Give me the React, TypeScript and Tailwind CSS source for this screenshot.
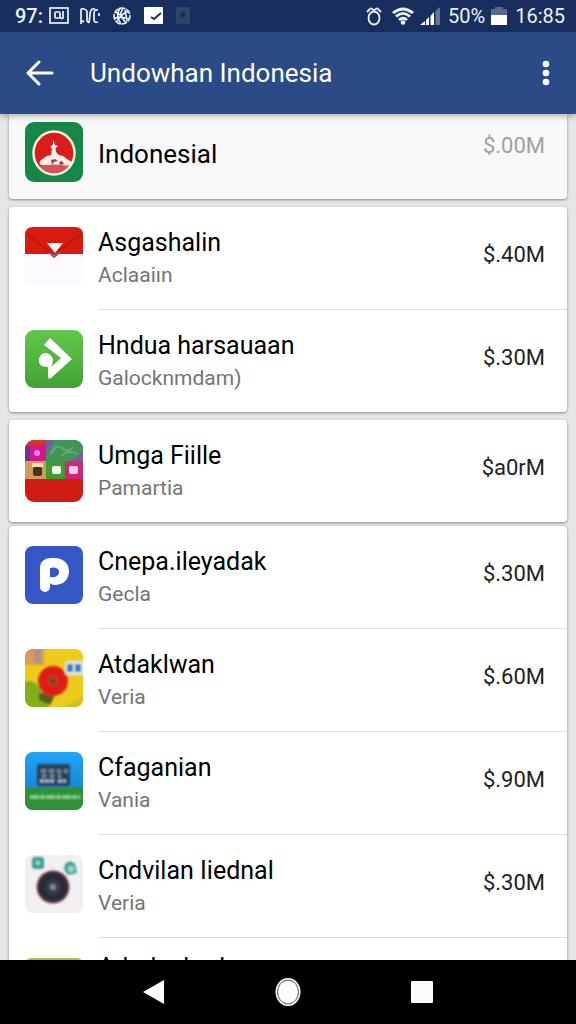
import type { ReactNode } from "react";

type App = { title: string; publisher?: string; price?: string; icon: ReactNode };

function Emblem() {
  return (
    <svg viewBox="0 0 58 60" className="h-15 w-full">
      <rect width="58" height="60" rx="9" fill="#168747" />
      <ellipse cx="29" cy="31" rx="20.5" ry="21.5" fill="#d91c1c" stroke="#f3f1df" strokeWidth="2.5" />
      <path d="M28.5 18 L30 23 33 24 30.5 26 31 30 34 33 38 34 42 37 47 40 Q45 44 41 44 L16 43 Q13 41 16 38 L22 34 26 33 27 26 25 25 27.5 23Z" fill="#fbf0ee" />
      <path d="M26 38 l4 -1 3 2 -4 1 -2 3Z M34 40 l3 -1 2 3 -4 1Z" fill="#9f4540" />
      <path d="M14 44 q15 -3 30 0 q-6 7 -15 7 q-9 0 -15 -7Z" fill="#d85356" />
    </svg>
  );
}

function Envelope() {
  return (
    <svg viewBox="0 0 58 60" className="h-15 w-full">
      <path d="M0 25 H58 V52 Q58 59 50 59 H8 Q0 59 0 52Z" fill="#fdfaff" />
      <path d="M0 27 V8 Q0 0 8 0 H50 Q58 0 58 8 V27Z" fill="#d91a10" />
      <path d="M2 7 L25 25 Q29 29 33 25 L56 7" fill="none" stroke="#bd1710" strokeWidth="2" />
      <path d="M22 16 H38 L30 26Z" fill="#fff4f4" />
      <path d="M24 25 L29 30 35 25" fill="none" stroke="#995160" strokeWidth="2" />
    </svg>
  );
}

function GreenArrow() {
  return (
    <svg viewBox="0 0 58 58" className="w-full">
      <defs>
        <linearGradient id="leaf" x1="0" y1="0" x2="0" y2="1">
          <stop stopColor="#62c74c" />
          <stop offset="1" stopColor="#43a136" />
        </linearGradient>
      </defs>
      <rect width="58" height="58" rx="9" fill="url(#leaf)" />
      <path d="M25 8 L47 29 26 48 Q23 50 23 46 V37 Q14 37 14 31 Q14 23 21 23 Q26 24 28 29 Q28 34 26 37 L36 28 19 15Z" fill="#fff" />
    </svg>
  );
}

function TileGrid() {
  return (
    <svg viewBox="0 0 58 62" className="w-full">
      <defs>
        <clipPath id="tiles"><rect width="58" height="62" rx="9" /></clipPath>
        <filter id="tileSoft"><feGaussianBlur stdDeviation="0.6" /></filter>
      </defs>
      <g clipPath="url(#tiles)">
        <rect width="58" height="62" fill="#d11c14" />
        <g filter="url(#tileSoft)">
          <rect width="22" height="21" fill="#d63825" />
          <rect y="6" width="6" height="15" fill="#6a3596" />
          <rect x="5" y="5" width="16" height="16" fill="#d3148b" />
          <circle cx="12" cy="13" r="3" fill="#f68cdf" />
          <rect x="21" y="-2" width="39" height="23" fill="#3f9656" />
          <path d="M21 0 H30 L24 10 21 14Z M50 18 L58 10 V21 H45Z" fill="#7062a0" />
          <path d="M26 14 Q31 3 37 8 T48 7 M36 16 Q43 9 53 14" fill="none" stroke="#68a878" strokeWidth="2" />
          <rect y="21" width="21" height="18" fill="#d29b58" />
          <rect x="7" y="23" width="11" height="4" fill="#f5dfb5" />
          <rect x="8" y="27" width="9" height="9" rx="2" fill="#453329" />
          <rect x="21" y="21" width="19" height="18" fill="#419c31" />
          <rect x="27" y="26" width="9" height="8" rx="2" fill="#effff0" />
          <rect x="40" y="21" width="20" height="18" fill="#ce2778" />
          <rect x="44" y="26" width="9" height="8" rx="2" fill="#ffc7eb" />
        </g>
      </g>
    </svg>
  );
}

function BlueP() {
  return (
    <svg viewBox="0 0 58 58" className="w-full">
      <rect width="58" height="58" rx="8" fill="#3457c5" />
      <path d="M20 41 V22 Q20 17 26 17 H30 Q39 18 39 26 Q38 34 29 34" fill="none" stroke="#fff" strokeWidth="10" strokeLinecap="round" />
      <path d="M25 22 Q33 20 34 27 Q33 32 25 31Z" fill="#3457c5" />
    </svg>
  );
}

function Flower() {
  return (
    <svg viewBox="0 0 58 58" className="w-full">
      <defs>
        <clipPath id="meadow"><rect width="58" height="58" rx="8" /></clipPath>
        <filter id="soft"><feGaussianBlur stdDeviation="1" /></filter>
      </defs>
      <g clipPath="url(#meadow)">
        <rect width="58" height="58" fill="#eccb1b" />
        <g filter="url(#soft)">
          <path d="M-3 34 Q8 28 16 40 L25 60 H-3Z" fill="#83ae1f" />
          <path d="M30 60 L60 48 V60Z" fill="#c9c41c" />
          <rect x="-2" y="-2" width="21" height="18" fill="#df9950" />
          <rect x="9" y="0" width="7" height="14" fill="#a89190" />
          <path d="M14 44 L31 44 25 56 14 51Z" fill="#5b5c22" />
          <circle cx="28" cy="32" r="15" fill="#dd1e12" />
          <circle cx="28" cy="32" r="5" fill="#a4481b" />
          <circle cx="28" cy="32" r="2" fill="#4f3c23" />
          <rect x="40" y="12" width="20" height="14" rx="3" fill="#d9e9ed" />
          <path d="M42 15 h6 v8 h-6Z M50 15 h6 v8 h-6Z" fill="#397bc4" />
        </g>
      </g>
    </svg>
  );
}

function Scoreboard() {
  return (
    <svg viewBox="0 0 58 58" className="w-full">
      <defs>
        <linearGradient id="sky" x1="0" y1="0" x2="0" y2="1">
          <stop stopColor="#20a5f4" />
          <stop offset="1" stopColor="#1475ca" />
        </linearGradient>
        <clipPath id="board"><rect width="58" height="58" rx="8" /></clipPath>
        <filter id="worn"><feGaussianBlur stdDeviation="0.9" /></filter>
      </defs>
      <g clipPath="url(#board)">
        <rect width="58" height="58" fill="url(#sky)" />
        <rect y="36" width="58" height="22" fill="#2e9137" />
        <g filter="url(#worn)">
          <rect x="12" y="12" width="33" height="22" rx="3" fill="#25415f" />
          <path d="M16 19 h5 M24 19 h5 M32 19 h4 M39 19 h4 M17 24 h4 M25 24 h4 M33 24 h3" stroke="#728292" strokeWidth="4" />
          <path d="M15 29 h15 M33 29 h8" stroke="#b4c0ca" strokeWidth="3" strokeDasharray="4 1" />
          <path d="M5 45 h50" stroke="#8bc990" strokeWidth="4" strokeDasharray="9 1 5 1" />
        </g>
      </g>
    </svg>
  );
}

function Lens() {
  return (
    <svg viewBox="0 0 58 58" className="w-full">
      <defs>
        <filter id="focus"><feGaussianBlur stdDeviation="0.9" /></filter>
      </defs>
      <rect width="58" height="58" rx="8" fill="#f0f0f0" />
      <g filter="url(#focus)">
        <rect x="7" y="2" width="12" height="12" rx="3" fill="#3a9e96" />
        <path d="M11 6 h4 v4 h-4Z" fill="#9ed7cf" />
        <path d="M40 9 q5 -5 10 0 l2 9 -9 2 -4 -5Z" fill="#3da299" />
        <circle cx="46" cy="14" r="3" fill="#a4d8d1" />
        <circle cx="28" cy="32" r="16.5" fill="#78434a" />
        <circle cx="28" cy="32" r="15" fill="#292b38" />
        <circle cx="28" cy="32" r="8" fill="#343b49" />
        <circle cx="28" cy="32" r="3" fill="#7e8998" />
      </g>
    </svg>
  );
}

function LimeTile() {
  return (
    <svg viewBox="0 0 58 58" className="w-full">
      <rect width="58" height="58" rx="6" fill="#adc03c" />
    </svg>
  );
}

const groups: App[][] = [
  [
    { title: "Asgashalin", publisher: "Aclaaiın", price: "$.40M", icon: <Envelope /> },
    { title: "Hndua harsauaan", publisher: "Galocknmdam)", price: "$.30M", icon: <GreenArrow /> },
  ],
  [{ title: "Umga Fiille", publisher: "Pamartia", price: "$a0rM", icon: <TileGrid /> }],
  [
    { title: "Cnepa.ileyadak", publisher: "Gecla", price: "$.30M", icon: <BlueP /> },
    { title: "Atdaklwan", publisher: "Veria", price: "$.60M", icon: <Flower /> },
    { title: "Cfaganian", publisher: "Vania", price: "$.90M", icon: <Scoreboard /> },
    { title: "Cndvilan Iiednal", publisher: "Veria", price: "$.30M", icon: <Lens /> },
    { title: "Adndwdmd", icon: <LimeTile /> },
  ],
];

function AppRow({ app }: { app: App }) {
  return (
    <li className="group flex h-[103px] pl-4 last:h-[102px]">
      <div className="w-[58px] shrink-0 pt-5">{app.icon}</div>
      <div className="ml-[15px] flex flex-1 justify-between border-b border-[#dedede] pr-[22px] pt-5 group-last:border-b-0">
        <div>
          <h2 className={app.publisher ? "text-[25px] leading-8 text-black" : "text-[25px] leading-5 text-black"}>{app.title}</h2>
          {app.publisher && <p className="text-[21px] leading-8 text-[#757575]">{app.publisher}</p>}
        </div>
        {app.price && <span className="pt-3 text-[22px] leading-8 text-[#222]">{app.price}</span>}
      </div>
    </li>
  );
}

function StatusBar() {
  return (
    <div className="flex h-8 shrink-0 items-center justify-between bg-[#172e5e] pl-[15px] pr-[11px] text-[20px] leading-7 text-[#eaf2fb]">
      <div className="flex items-center">
        <span className="w-[34px] font-medium">97:</span>
        <svg viewBox="0 0 20 18" className="h-[18px] w-5" fill="none" stroke="currentColor" strokeWidth="1.7">
          <rect x="1" y="1" width="18" height="15" />
          <rect x="6" y="5" width="5" height="6" rx="1" />
          <path d="M14 4 v8 M11 10 l2 2" />
        </svg>
        <svg viewBox="0 0 20 18" className="ml-[11px] h-[18px] w-5" fill="none" stroke="currentColor" strokeWidth="1.7">
          <path d="M1 17 V3 Q1 1 4 2 Q8 3 7 8 V14 L9 16 M1 13 L4 15 M15 2 Q10 1 10 8 L9 16 M18 3 Q14 2 14 7 V13 Q14 16 18 15 M19 6 v3" />
        </svg>
        <svg viewBox="0 0 20 20" className="ml-3 size-5" fill="none" stroke="currentColor" strokeWidth="1.6">
          <circle cx="10" cy="10" r="8" strokeDasharray="6 1" />
          <path d="M8 2 Q3 10 9 18 M11 2 L8 9 14 17 M3 6 L9 9 17 5 M2 12 L9 11 18 13 M13 4 L15 15 M5 15 L12 7" />
        </svg>
        <svg viewBox="0 0 20 18" className="ml-3 h-[18px] w-5">
          <rect width="19" height="17" rx="1" fill="#fff" />
          <path d="M7 10 L10 12 17 6" fill="none" stroke="#182e5d" strokeWidth="2" />
        </svg>
        <svg viewBox="0 0 14 18" className="ml-3 h-[18px] w-3.5">
          <rect width="14" height="17" rx="1" fill="#304368" />
          <circle cx="7" cy="8" r="2.5" fill="#172b57" />
        </svg>
      </div>
      <div className="flex items-center">
        <svg viewBox="0 0 16 19" className="h-[19px] w-4" fill="none" stroke="currentColor" strokeWidth="1.8">
          <ellipse cx="8" cy="11" rx="5.5" ry="6.5" />
          <path d="M1 5 L4 2 M15 5 L12 2 M4 1 l4 2 4 -2" />
        </svg>
        <svg viewBox="0 0 22 18" className="ml-2.5 h-[18px] w-[22px]" fill="currentColor">
          <path d="M0 5 Q11 -4 22 5 L20 7 Q11 0 2 7Z M3 8.5 Q11 1.5 19 8.5 L17 10.5 Q11 5 5 10.5Z M6 12 Q11 7.5 16 12 L14 14 Q11 11.5 8 14Z" />
          <circle cx="11" cy="15.5" r="2.3" />
        </svg>
        <svg viewBox="0 0 20 18" className="ml-1.5 h-[18px] w-5">
          <path d="M0 18 L5 14 V18Z M6 13 L9 10 V18 H6Z M10.5 9 L14 5 V18 H10.5Z" fill="#fff" />
          <path d="M15.5 4 L20 0 V18 H15.5Z" fill="#677697" />
        </svg>
        <span className="ml-2">50%</span>
        <svg viewBox="0 0 16 18" className="ml-1.5 h-[18px] w-4">
          <path d="M0 2 H4 V0 H12 V2 H16 V8 H0Z" fill="#58698d" />
          <rect y="8" width="16" height="10" fill="#fff" />
        </svg>
        <span className="ml-2">16:85</span>
      </div>
    </div>
  );
}

export default function App() {
  return (
    <div className="flex h-screen flex-col overflow-hidden bg-[#e6e6e6] font-['Roboto',sans-serif]">
      <StatusBar />
      <header className="relative flex h-[82px] shrink-0 items-center bg-[#2a4b87] pl-[26px] pr-4 text-white shadow-[0_2px_6px_rgba(0,0,0,0.3)]">
        <button aria-label="Back" className="flex size-7 items-center justify-center">
          <svg viewBox="0 0 28 28" className="size-7" fill="none" stroke="currentColor" strokeWidth="3" strokeLinecap="round" strokeLinejoin="round">
            <path d="M26 14 H3 M13 3 L2 14 13 25" />
          </svg>
        </button>
        <h1 className="ml-9 flex-1 text-[26px] leading-8">Undowhan Indonesia</h1>
        <button aria-label="More options" className="flex h-8 w-7 items-center justify-center">
          <svg viewBox="0 0 8 26" className="h-[26px] w-2" fill="currentColor">
            <circle cx="4" cy="4" r="3.3" />
            <circle cx="4" cy="13" r="3.3" />
            <circle cx="4" cy="22" r="3.3" />
          </svg>
        </button>
      </header>

      <main className="min-h-0 flex-1 overflow-hidden px-[9px]">
        <section className="flex h-[85px] rounded-b-sm bg-[#f8f8f8] pl-4 pr-[22px] pt-2 shadow-[0_1px_3px_rgba(0,0,0,0.4)]">
          <div className="w-[58px]"><Emblem /></div>
          <h2 className="ml-[15px] flex-1 pt-4 text-[26px] leading-8">Indonesial</h2>
          <span className="pt-2 text-[22px] leading-8 text-[#a0a0a0]">$.00M</span>
        </section>
        {groups.map((apps) => (
          <ul key={apps[0].title} className="mt-2 rounded-sm bg-white shadow-[0_1px_3px_rgba(0,0,0,0.4)] last:mt-1">
            {apps.map((app) => <AppRow key={app.title} app={app} />)}
          </ul>
        ))}
      </main>

      <nav className="flex h-16 shrink-0 items-center justify-center gap-[108px] bg-black text-[#fcfcfc]">
        <button aria-label="Back">
          <svg viewBox="0 0 26 26" className="size-[26px]" fill="currentColor"><path d="M2 13 L23 1 V25Z" /></svg>
        </button>
        <button aria-label="Home">
          <svg viewBox="0 0 26 28" className="h-7 w-[26px]">
            <ellipse cx="13" cy="14" rx="12.5" ry="14" fill="#fcfcfc" />
            <ellipse cx="13" cy="14" rx="10.5" ry="12" fill="none" stroke="#555" strokeWidth="1" />
          </svg>
        </button>
        <button aria-label="Recent apps">
          <svg viewBox="0 0 26 26" className="size-[26px]" fill="currentColor"><rect x="2" y="2" width="22" height="22" rx="1" /></svg>
        </button>
      </nav>
    </div>
  );
}
